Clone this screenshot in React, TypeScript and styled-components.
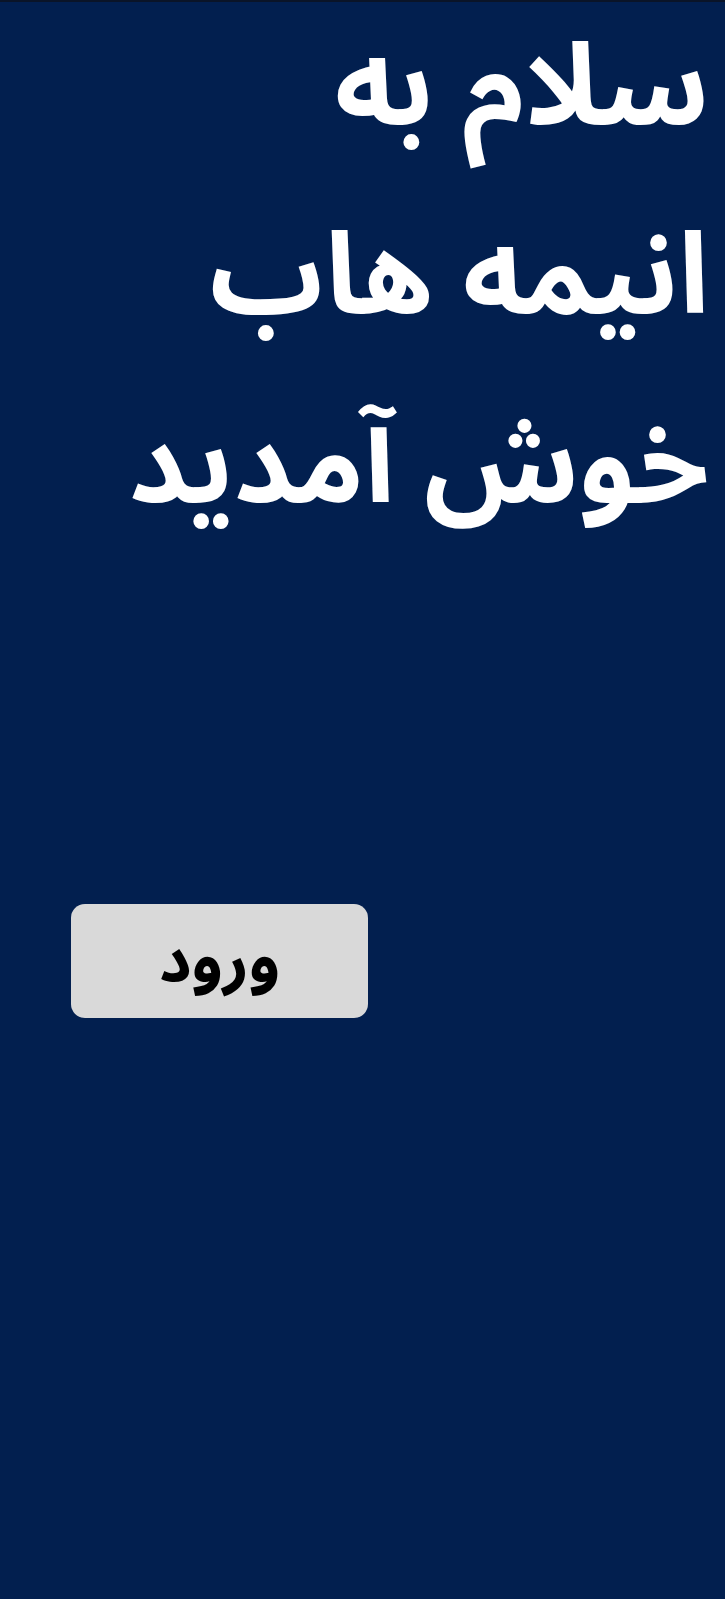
import React from "react";
import styled, { createGlobalStyle } from "styled-components";

const GlobalStyle = createGlobalStyle`
  html, body {
    margin: 0;
    padding: 0;
    background: #021f4f;
  }
  body {
    font-family: "Noto Sans Arabic", "Noto Sans", "DejaVu Sans", sans-serif;
  }
`;

const Screen = styled.div`
  box-sizing: border-box;
  width: 725px;
  height: 1599px;
  overflow: hidden;
  background: #021f4f;
  border-top: 2px solid #0a1428;
  display: flex;
  flex-direction: column;
  direction: rtl;
`;

const Title = styled.h1`
  margin: 0;
  padding: 0 16px 0 0;
  display: flex;
  flex-direction: column;
  gap: 17px;
  color: #ffffff;
  font-family: "Noto Sans Arabic", "Noto Sans", "DejaVu Sans", sans-serif;
  font-size: 113px;
  font-weight: 700;
  line-height: 172px;
  text-align: right;
  white-space: nowrap;
`;

const Line = styled.span`
  display: block;
`;

const ButtonRow = styled.div`
  display: flex;
  padding: 352px 0 0 71px;
  direction: ltr;
`;

const LoginButton = styled.button`
  width: 297px;
  height: 114px;
  border: none;
  border-radius: 14px;
  background: #d9d9d9;
  color: #000000;
  font-family: "Noto Sans Arabic", "Noto Sans", "DejaVu Sans", sans-serif;
  font-size: 63px;
  font-weight: 700;
  display: flex;
  align-items: center;
  justify-content: center;
  padding: 0;
`;

export default function App() {
  return (
    <>
      <GlobalStyle />
      <Screen>
        <Title>
          <Line>سلام به</Line>
          <Line>انیمه هاب</Line>
          <Line>خوش آمدید</Line>
        </Title>
        <ButtonRow>
          <LoginButton>ورود</LoginButton>
        </ButtonRow>
      </Screen>
    </>
  );
}
